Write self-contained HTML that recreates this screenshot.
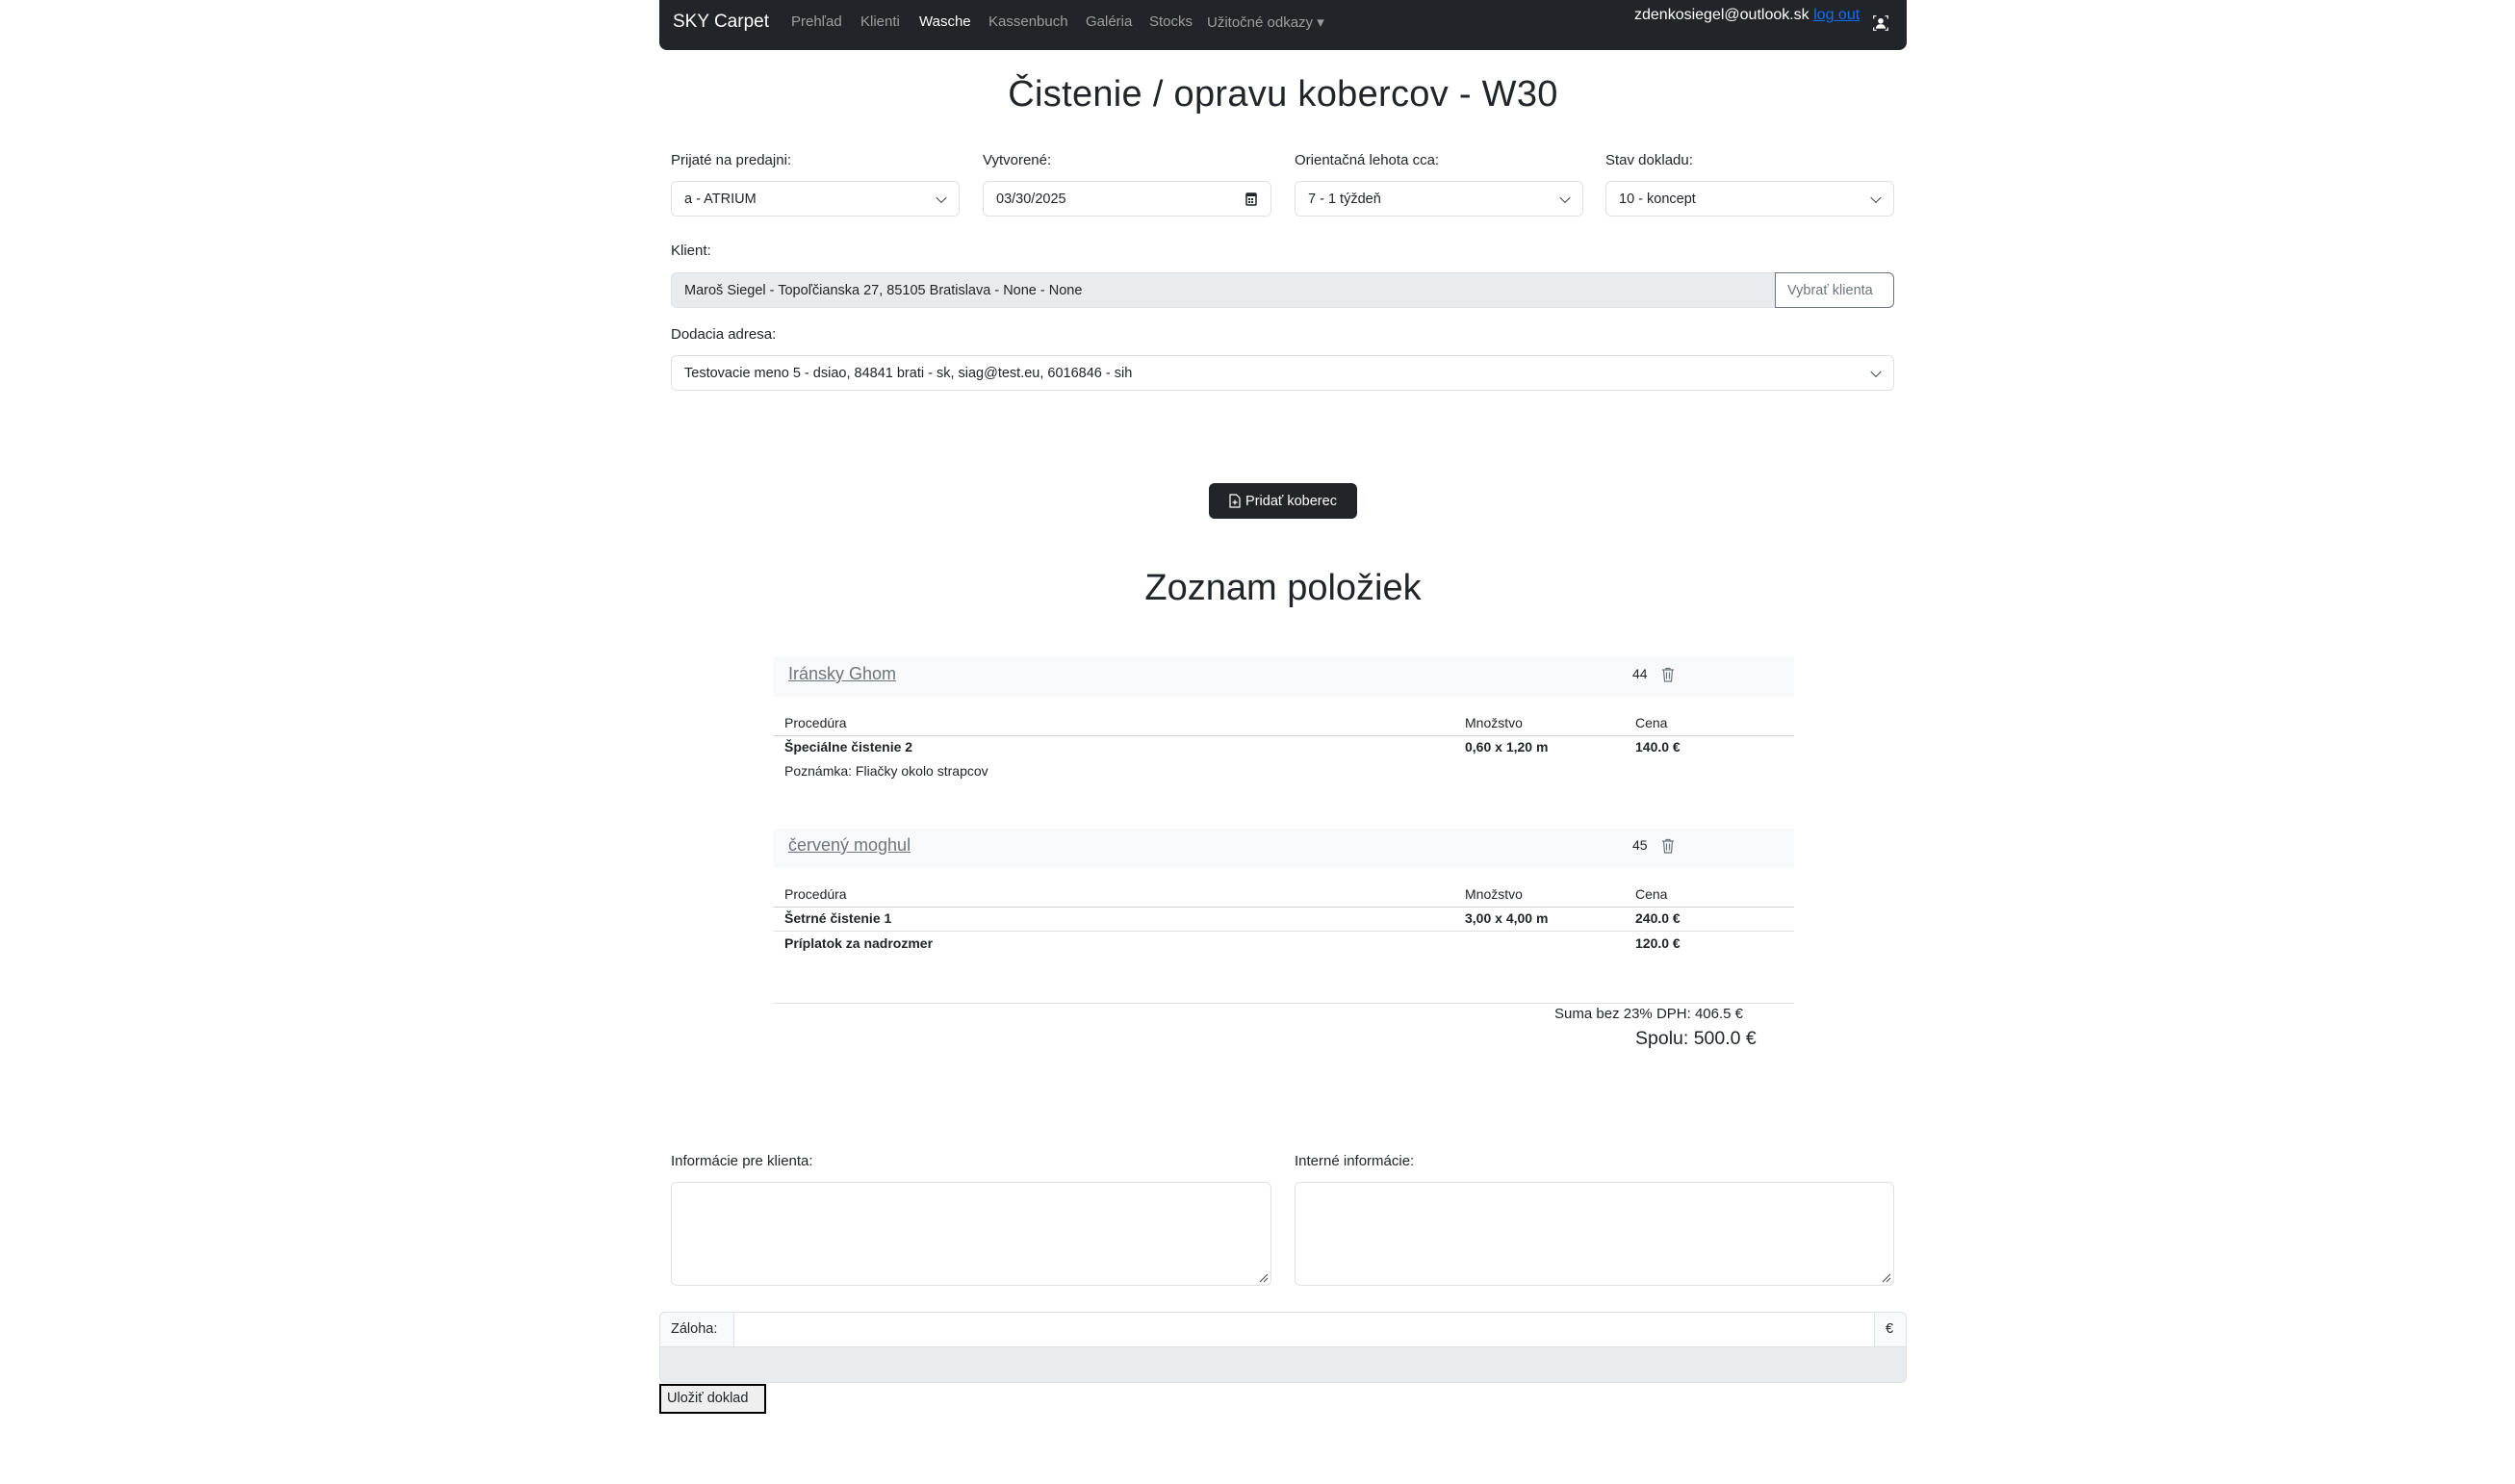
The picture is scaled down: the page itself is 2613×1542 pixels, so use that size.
<!DOCTYPE html>
<html><head><meta charset="utf-8">
<style>
*{box-sizing:border-box;margin:0;padding:0}
html,body{width:2613px;height:1542px;background:#fff;overflow:hidden}
body{font-family:"Liberation Sans",sans-serif;color:#212529;position:relative;font-size:15px}
.a{position:absolute;white-space:nowrap}
.nav{position:absolute;left:685px;top:0;width:1296px;height:52px;background:#212529;border-radius:0 0 8px 8px}
.nav .a{color:rgba(255,255,255,.55);font-size:15px;top:14px}
.lbl{font-size:15px;line-height:20px}
.ctl{position:absolute;border:1px solid #dee2e6;border-radius:6px;background:#fff;font-size:14.5px;padding-left:13px;display:flex;align-items:center}
.chev{position:absolute;right:14px;top:50%;width:8px;height:8px;border-right:1.6px solid #343a40;border-bottom:1.6px solid #343a40;transform:translateY(-70%) rotate(45deg)}
.ih{position:absolute;left:803px;width:1061px;background:#f8f9fa}
.ih a{position:absolute;left:16px;color:#6c757d;font-size:18px;text-decoration:underline}
.t{font-size:14px;line-height:18px}
.b{font-weight:bold}
.ln{position:absolute;left:803px;width:1061px;height:1px;background:#dee2e6}
.rs{position:absolute;right:2px;bottom:2px}
</style></head><body>
<div class="nav">
 <div class="a" style="left:14px;top:12px;color:#fff;font-size:19px">SKY Carpet</div>
 <div class="a" style="left:137px">Prehľad</div>
 <div class="a" style="left:209px">Klienti</div>
 <div class="a" style="left:270px;color:#fff">Wasche</div>
 <div class="a" style="left:342px">Kassenbuch</div>
 <div class="a" style="left:443px">Galéria</div>
 <div class="a" style="left:509px">Stocks</div>
 <div class="a" style="left:569px">Užitočné odkazy ▾</div>
 <div class="a" style="left:1013px;top:7px;color:#fff;font-size:16px">zdenkosiegel@outlook.sk <span style="color:#0d6efd;text-decoration:underline">log out</span></div>
 <svg class="a" style="left:1260px;top:15px" width="18" height="18" viewBox="0 0 16 16" fill="#fff"><path d="M1 1h3v1H2v2H1zM15 1h-3v1h2v2h1zM1 15h3v-1H2v-2H1zM15 15h-3v-1h2v-2h1z"/><circle cx="8" cy="6" r="2.5"/><path d="M3.5 13c0-2.5 2-4 4.5-4s4.5 1.5 4.5 4z"/></svg>
</div>

<div class="a" style="left:0;width:2666px;text-align:center;top:74px;font-size:38px;line-height:48px;color:#212529;letter-spacing:0.3px">Čistenie / opravu kobercov - W30</div>

<div class="a lbl" style="left:697px;top:157px">Prijaté na predajni:</div>
<div class="a lbl" style="left:1021px;top:157px">Vytvorené:</div>
<div class="a lbl" style="left:1345px;top:157px">Orientačná lehota cca:</div>
<div class="a lbl" style="left:1668px;top:157px">Stav dokladu:</div>
<div class="ctl" style="left:697px;top:188px;width:300px;height:37px">a - ATRIUM<span class="chev"></span></div>
<div class="ctl" style="left:1021px;top:188px;width:300px;height:37px">03/30/2025<svg style="position:absolute;right:14px;top:11px" width="12" height="14" viewBox="0 0 12 14"><rect x="1" y="1" width="10" height="12" rx="1" fill="none" stroke="#212529" stroke-width="1.5"/><rect x="1" y="1" width="10" height="3" fill="#212529"/><rect x="3" y="6" width="2" height="2" fill="#212529"/><rect x="6" y="6" width="2" height="2" fill="#212529"/><rect x="3" y="9" width="2" height="2" fill="#212529"/><rect x="6" y="9" width="2" height="2" fill="#212529"/></svg></div>
<div class="ctl" style="left:1345px;top:188px;width:300px;height:37px">7 - 1 týždeň<span class="chev"></span></div>
<div class="ctl" style="left:1668px;top:188px;width:300px;height:37px">10 - koncept<span class="chev"></span></div>

<div class="a lbl" style="left:697px;top:251px">Klient:</div>
<div class="ctl" style="left:697px;top:283px;width:1148px;height:37px;background:#e9ecef;border-radius:6px 0 0 6px">Maroš Siegel - Topoľčianska 27, 85105 Bratislava - None - None</div>
<div class="ctl" style="left:1844px;top:283px;width:124px;height:37px;border-color:#6c757d;border-radius:0 6px 6px 0;color:#6c757d;padding-left:12px">Vybrať klienta</div>

<div class="a lbl" style="left:697px;top:338px">Dodacia adresa:</div>
<div class="ctl" style="left:697px;top:369px;width:1271px;height:37px">Testovacie meno 5 - dsiao, 84841 brati - sk, siag@test.eu, 6016846 - sih<span class="chev"></span></div>

<div class="a" style="left:1256px;top:502px;width:154px;height:37px;background:#212529;border-radius:6px;color:#fff;font-size:14.5px;display:flex;align-items:center;justify-content:center;gap:5px"><svg width="12" height="15" viewBox="0 0 12 15"><path d="M1 1h6.5L11 4.5V14H1z" fill="none" stroke="#fff" stroke-width="1.2"/><path d="M6 6.5v5M3.5 9h5" stroke="#fff" stroke-width="1.2"/></svg>Pridať koberec</div>

<div class="a" style="left:0;width:2666px;text-align:center;top:587px;font-size:38px;line-height:48px">Zoznam položiek</div>

<div class="ih" style="top:682px;height:42px"><a style="top:8px">Iránsky Ghom</a></div>
<div class="a t" style="left:1696px;top:691px">44</div>
<svg class="a" style="left:1726px;top:693px" width="14" height="16" viewBox="0 0 14 16"><path d="M1 3h12M5 3V1.5h4V3M2.5 3l1 12h7l1-12M5.5 5.5v7M8.5 5.5v7" fill="none" stroke="#6c757d" stroke-width="1.2"/></svg>
<div class="a t" style="left:815px;top:742px">Procedúra</div>
<div class="a t" style="left:1522px;top:742px">Množstvo</div>
<div class="a t" style="left:1699px;top:742px">Cena</div>
<div class="ln" style="top:764px;background:#ced4da"></div>
<div class="a t b" style="left:815px;top:767px">Špeciálne čistenie 2</div>
<div class="a t b" style="left:1522px;top:767px">0,60 x 1,20 m</div>
<div class="a t b" style="left:1699px;top:767px">140.0 €</div>
<div class="a t" style="left:815px;top:792px">Poznámka: Fliačky okolo strapcov</div>

<div class="ih" style="top:861px;height:41px"><a style="top:7px">červený moghul</a></div>
<div class="a t" style="left:1696px;top:869px">45</div>
<svg class="a" style="left:1726px;top:871px" width="14" height="16" viewBox="0 0 14 16"><path d="M1 3h12M5 3V1.5h4V3M2.5 3l1 12h7l1-12M5.5 5.5v7M8.5 5.5v7" fill="none" stroke="#6c757d" stroke-width="1.2"/></svg>
<div class="a t" style="left:815px;top:920px">Procedúra</div>
<div class="a t" style="left:1522px;top:920px">Množstvo</div>
<div class="a t" style="left:1699px;top:920px">Cena</div>
<div class="ln" style="top:942px;background:#ced4da"></div>
<div class="a t b" style="left:815px;top:945px">Šetrné čistenie 1</div>
<div class="a t b" style="left:1522px;top:945px">3,00 x 4,00 m</div>
<div class="a t b" style="left:1699px;top:945px">240.0 €</div>
<div class="ln" style="top:967px"></div>
<div class="a t b" style="left:815px;top:971px">Príplatok za nadrozmer</div>
<div class="a t b" style="left:1699px;top:971px">120.0 €</div>

<div class="ln" style="top:1042px"></div>
<div class="a" style="right:802px;top:1045px;font-size:15px;line-height:18px">Suma bez 23% DPH: 406.5 €</div>
<div class="a" style="left:1699px;top:1068px;font-size:19.5px;line-height:23px">Spolu: 500.0 €</div>

<div class="a lbl" style="left:697px;top:1197px">Informácie pre klienta:</div>
<div class="a lbl" style="left:1345px;top:1197px">Interné informácie:</div>
<div class="ctl" style="left:697px;top:1228px;width:624px;height:108px"><svg class="rs" width="12" height="12" viewBox="0 0 12 12"><path d="M11 3L3 11M11 7L7 11" stroke="#555" stroke-width="1.2"/></svg></div>
<div class="ctl" style="left:1345px;top:1228px;width:623px;height:108px"><svg class="rs" width="12" height="12" viewBox="0 0 12 12"><path d="M11 3L3 11M11 7L7 11" stroke="#555" stroke-width="1.2"/></svg></div>

<div class="a" style="left:685px;top:1363px;width:1296px;height:37px;border:1px solid #dee2e6;border-radius:6px 6px 0 0;background:#fff"></div>
<div class="a" style="left:685px;top:1363px;width:78px;height:37px;border:1px solid #dee2e6;border-radius:6px 0 0 0;background:#f8f9fa;font-size:14.5px;padding:9px 0 0 11px">Záloha:</div>
<div class="a" style="left:1947px;top:1363px;width:34px;height:37px;border:1px solid #dee2e6;border-radius:0 6px 0 0;background:#f8f9fa;font-size:14.5px;padding:9px 0 0 11px">€</div>
<div class="a" style="left:685px;top:1399px;width:1296px;height:38px;background:#e9ecef;border:1px solid #dee2e6;border-radius:0 0 6px 6px"></div>
<div class="a" style="left:685px;top:1438px;width:111px;height:31px;border:2px solid #000;background:#efefef;font-size:14.5px;padding:5px 0 0 6px">Uložiť doklad</div>
</body></html>
